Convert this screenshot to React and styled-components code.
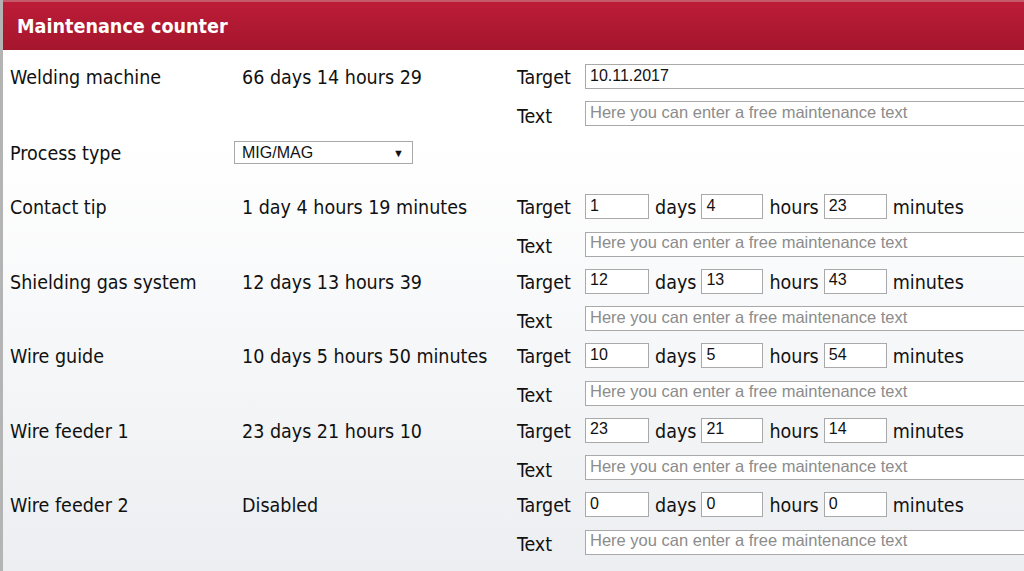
import React from 'react';
import styled, {createGlobalStyle} from 'styled-components';

const GlobalStyle = createGlobalStyle`
  html, body {
    margin: 0;
    padding: 0;
    overflow: hidden;
  }
  body {
    font-family: "DejaVu Sans Condensed", "DejaVu Sans", sans-serif;
  }
`

const Panel = styled.div`
  width: 1024px;
  height: 571px;
  box-sizing: border-box;
  border-left: 3px solid #b4b4b4;
  background: linear-gradient(#ffffff 25%, #eceef1 100%);
  overflow: hidden;
`

const Header = styled.div`
  height: 50px;
  box-sizing: border-box;
  border-top: 2px solid #c45a6a;
  background: linear-gradient(#bd1c37, #a5162d);
  display: flex;
  align-items: center;
  padding-left: 14px;
  color: #fff;
  font-weight: bold;
  font-size: 19.6px;
`

const Body = styled.div`
  padding: 14px 0 0 7px;
  display: flex;
  flex-direction: column;
`

const Section = styled.div`
  display: grid;
  grid-template-columns: ${({first}) => first ?? 232}px 275px 68px 1fr;
  grid-auto-rows: 25px;
  row-gap: 12.25px;
  margin-bottom: ${({gap}) => gap ?? 12.25}px;
  align-items: center;
  font-size: 19.5px;
  color: #111;
`

const Label = styled.div`
  white-space: nowrap;
  padding-top: ${({low}) => (low ? 5 : 2)}px;
`

const Line = styled.div`
  display: flex;
  align-items: center;
  white-space: nowrap;
`

const Input = styled.input`
  box-sizing: border-box;
  height: 25px;
  width: ${({w}) => w}px;
  border: 1px solid #a9a9a9;
  background: #fff;
  padding: 0 0 2px 4px;
  font-family: "Liberation Sans", Arial, sans-serif;
  font-size: 16px;
  color: #111;
  outline: none;
  flex-shrink: 0;
  &::placeholder {
    color: #8c8c8c;
    font-size: 16.5px;
  }
`

const Unit = styled.span`
  margin: 0 5px 0 6px;
  padding-top: 2px;
`

const Select = styled.div`
  box-sizing: border-box;
  width: 179px;
  height: 23px;
  border: 1px solid #a9a9a9;
  background: #fff;
  display: flex;
  align-items: center;
  justify-content: space-between;
  padding: 0 8px 0 7px;
  font-family: "Liberation Sans", Arial, sans-serif;
  font-size: 16px;
  color: #111;
`

const Arrow = styled.span`
  font-size: 11px;
`

const PLACEHOLDER = 'Here you can enter a free maintenance text'

const counters = [
  {name: 'Contact tip', value: '1 day 4 hours 19 minutes', target: ['1', '4', '23']},
  {name: 'Shielding gas system', value: '12 days 13 hours 39', target: ['12', '13', '43']},
  {name: 'Wire guide', value: '10 days 5 hours 50 minutes', target: ['10', '5', '54']},
  {name: 'Wire feeder 1', value: '23 days 21 hours 10', target: ['23', '21', '14']},
  {name: 'Wire feeder 2', value: 'Disabled', target: ['0', '0', '0']},
]

const TargetFields = ({target: [d, h, m]}) => (
  <Line>
    <Input w={64} defaultValue={d}/>
    <Unit>days</Unit>
    <Input w={62} defaultValue={h}/>
    <Unit>hours</Unit>
    <Input w={63} defaultValue={m}/>
    <Unit>minutes</Unit>
  </Line>
)

const App = () => (
  <>
    <GlobalStyle/>
    <Panel>
      <Header>Maintenance counter</Header>
      <Body>
        <Section gap={14}>
          <Label>Welding machine</Label>
          <Label>66 days 14 hours 29</Label>
          <Label>Target</Label>
          <Input w={460} defaultValue="10.11.2017"/>
          <div/>
          <div/>
          <Label low>Text</Label>
          <Input w={460} placeholder={PLACEHOLDER}/>
        </Section>
        <Section first={224} gap={29}>
          <Label>Process type</Label>
          <Select>
            <span>MIG/MAG</span>
            <Arrow>▼</Arrow>
          </Select>
        </Section>
        {counters.map((c) => (
          <Section key={c.name}>
            <Label>{c.name}</Label>
            <Label>{c.value}</Label>
            <Label>Target</Label>
            <TargetFields target={c.target}/>
            <div/>
            <div/>
            <Label low>Text</Label>
            <Input w={460} placeholder={PLACEHOLDER}/>
          </Section>
        ))}
      </Body>
    </Panel>
  </>
);

export default App;
